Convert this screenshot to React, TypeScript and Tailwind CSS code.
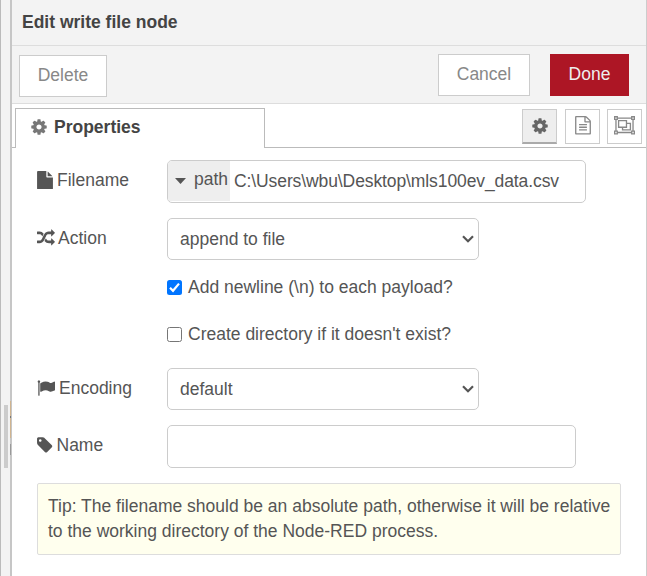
import type { ReactNode } from "react";

function Glyph({ width, d, className }: { width: number; d: string; className: string }) {
  return (
    <svg viewBox={`0 0 ${width} 1792`} className={`block shrink-0 fill-current ${className}`} aria-hidden="true">
      <path transform="translate(0 1536) scale(1 -1)" d={d} />
    </svg>
  );
}

const COG =
  "M1024 640q0 106 -75 181t-181 75t-181 -75t-75 -181t75 -181t181 -75t181 75t75 181zM1536 749v-222q0 -12 -8 -23t-20 -13l-185 -28q-19 -54 -39 -91q35 -50 107 -138q10 -12 10 -25t-9 -23q-27 -37 -99 -108t-94 -71q-12 0 -26 9l-138 108q-44 -23 -91 -38q-16 -136 -29 -186q-7 -28 -36 -28h-222q-14 0 -24.5 8.5t-11.5 21.5l-28 184q-49 16 -90 37l-141 -107q-10 -9 -25 -9q-14 0 -25 11q-126 114 -165 168q-7 10 -7 23q0 12 8 23q15 21 51 66.5t54 70.5q-27 50 -41 99l-183 27q-13 2 -21 12.5t-8 23.5v222q0 12 8 23t19 13l186 28q14 46 39 92q-40 57 -107 138q-10 12 -10 24q0 10 9 23q26 36 98.5 107.5t94.5 71.5q13 0 26 -10l138 -107q44 23 91 38q16 136 29 186q7 28 36 28h222q14 0 24.5 -8.5t11.5 -21.5l28 -184q49 -16 90 -37l142 107q9 9 24 9q13 0 25 -10q129 -119 165 -170q7 -8 7 -22q0 -12 -8 -23q-15 -21 -51 -66.5t-54 -70.5q26 -50 41 -98l183 -28q13 -2 21 -12.5t8 -23.5z";
const FILE =
  "M1024 1024v472q22 -14 36 -28l408 -408q14 -14 28 -36h-472zM896 992q0 -40 28 -68t68 -28h544v-1056q0 -40 -28 -68t-68 -28h-1344q-40 0 -68 28t-28 68v1600q0 40 28 68t68 28h800v-544z";
const RANDOM =
  "M666 1055q-60 -92 -137 -273q-22 45 -37 72.5t-40.5 63.5t-51 56.5t-63 35t-81.5 14.5h-224q-14 0 -23 9t-9 23v192q0 14 9 23t23 9h224q250 0 410 -225zM1792 256q0 -14 -9 -23l-320 -320q-9 -9 -23 -9q-13 0 -22.5 9.5t-9.5 22.5v192q-32 0 -85 -0.5t-81 -1t-73 1t-71 5t-64 10.5t-63 18.5t-58 28.5t-59 40t-55 53.5t-56 69.5q59 93 136 273q22 -45 37 -72.5t40.5 -63.5t51 -56.5t63 -35t81.5 -14.5h256v192q0 14 9 23t23 9q12 0 24 -10l319 -319q9 -9 9 -23zM1792 1152q0 -14 -9 -23l-320 -320q-9 -9 -23 -9q-13 0 -22.5 9.5t-9.5 22.5v192h-256q-48 0 -87 -15t-69 -45t-51 -61.5t-45 -77.5q-32 -62 -78 -171q-29 -66 -49.5 -111t-54 -105t-64 -100t-74 -83t-90 -68.5t-106.5 -42t-128 -16.5h-224q-14 0 -23 9t-9 23v192q0 14 9 23t23 9h224q48 0 87 15t69 45t51 61.5t45 77.5q32 62 78 171q29 66 49.5 111t54 105t64 100t74 83t90 68.5t106.5 42t128 16.5h256v192q0 14 9 23t23 9q12 0 24 -10l319 -319q9 -9 9 -23z";
const FLAG =
  "M320 1280q0 -72 -64 -110v-1266q0 -13 -9.5 -22.5t-22.5 -9.5h-64q-13 0 -22.5 9.5t-9.5 22.5v1266q-64 38 -64 110q0 53 37.5 90.5t90.5 37.5t90.5 -37.5t37.5 -90.5zM1792 1216v-763q0 -25 -12.5 -38.5t-39.5 -27.5q-215 -116 -369 -116q-61 0 -123.5 22t-108.5 48t-115.5 48t-142.5 22q-192 0 -464 -146q-17 -9 -33 -9q-26 0 -45 19t-19 45v742q0 32 31 55q21 14 79 43q236 120 421 120q107 0 200 -29t219 -88q38 -19 88 -19q54 0 117.5 21t110 47t88 47t54.5 21q26 0 45 -19t19 -45z";
const TAG =
  "M448 1088q0 53 -37.5 90.5t-90.5 37.5t-90.5 -37.5t-37.5 -90.5t37.5 -90.5t90.5 -37.5t90.5 37.5t37.5 90.5zM1515 512q0 -53 -37 -90l-491 -492q-39 -37 -91 -37q-53 0 -90 37l-715 716q-38 37 -64.5 101t-26.5 117v416q0 52 38 90t90 38h416q53 0 117 -26.5t102 -64.5l715 -714q37 -39 37 -91z";
const FILE_TEXT =
  "M1468 1156q28 -28 48 -76t20 -88v-1152q0 -40 -28 -68t-68 -28h-1344q-40 0 -68 28t-28 68v1600q0 40 28 68t68 28h896q40 0 88 -20t76 -48zM1024 1400v-376h376q-10 29 -22 41l-313 313q-12 12 -41 22zM1408 -128v1024h-416q-40 0 -68 28t-28 68v416h-768v-1536h1280zM384 736q0 14 9 23t23 9h704q14 0 23 -9t9 -23v-64q0 -14 -9 -23t-23 -9h-704q-14 0 -23 9t-9 23v64zM1120 512q14 0 23 -9t9 -23v-64q0 -14 -9 -23t-23 -9h-704q-14 0 -23 9t-9 23v64q0 14 9 23t23 9h704zM1120 256q14 0 23 -9t9 -23v-64q0 -14 -9 -23t-23 -9h-704q-14 0 -23 9t-9 23v64q0 14 9 23t23 9h704z";
const OBJECT_GROUP =
  "M2048 1152h-128v-1024h128v-384h-384v128h-1280v-128h-384v384h128v1024h-128v384h384v-128h1280v128h384v-384zM1792 1408v-128h128v128h-128zM128 1408v-128h128v128h-128zM256 -128v128h-128v-128h128zM1664 0v128h128v1024h-128v128h-1280v-128h-128v-1024h128v-128h1280zM1920 -128v128h-128v-128h128zM1280 896h384v-768h-896v256h-384v768h896v-256zM512 512h640v512h-640v-512zM1536 256v512h-256v-384h-384v-128h640z";

function Row({ icon, label, children }: { icon: ReactNode; label: string; children: ReactNode }) {
  return (
    <div className="flex">
      <div className="flex h-10 w-[130px] shrink-0 items-center gap-1">
        {icon}
        <span>{label}</span>
      </div>
      {children}
    </div>
  );
}

function Select({ value }: { value: string }) {
  return (
    <div className="flex h-[42px] w-[312px] items-center justify-between rounded-[5px] border border-[#ccc] pr-[4px] pl-3">
      <span>{value}</span>
      <svg viewBox="0 0 12 8" className="h-2 w-3 fill-none stroke-[#555] stroke-[2.2]">
        <path d="M1 1.2 6 6.2 11 1.2" />
      </svg>
    </div>
  );
}

function Check({ checked, label }: { checked?: boolean; label: string }) {
  return (
    <div className="ml-[130px] flex h-[25px] items-center gap-[6px]">
      {checked ? (
        <span className="flex size-[15px] items-center justify-center rounded-[2.5px] bg-[#0075ff]">
          <svg viewBox="0 0 15 15" className="size-[15px] fill-none stroke-white stroke-[2.2]">
            <path d="M3 7.8 6 10.8 12 3.6" />
          </svg>
        </span>
      ) : (
        <span className="size-[15px] rounded-[2.5px] border border-[#767676] bg-white" />
      )}
      <span>{label}</span>
    </div>
  );
}

export default function App() {
  return (
    <div className="flex h-[576px] w-[647px] overflow-hidden bg-white font-['Liberation_Sans',Arial,sans-serif] text-[17.5px] leading-[25px] text-[#555]">
      <div className="flex w-3 shrink-0 border-l border-[#bbb] bg-[#f3f3f3]">
        <div className="mt-[405px] ml-[3px] h-[63px] w-1 bg-[#ccc]" />
        <div className="ml-[2px] flex w-[2px] flex-col bg-[#c6c6c6]">
          <div className="mt-[401px] h-[15px] w-px bg-[#d0b48f]" />
          <div className="h-[2px] w-px bg-[#777]" />
          <div className="h-[20px] w-px bg-[#d0b48f]" />
          <div className="mt-[6px] h-[11px] w-px bg-[#999]" />
        </div>
      </div>
      <div className="flex flex-1 flex-col border-r border-[#ccc]">
        <div className="flex h-[46px] items-center border-b border-[#ddd] bg-[#f3f3f3] pb-[1px] pl-[10px] font-bold text-[#444]">
          Edit write file node
        </div>
        <div className="flex h-[58px] border-b border-[#ddd] bg-[#f3f3f3] pt-2 pr-[17px] pl-[7px] text-[#888]">
          <button className="mt-[1px] h-[42px] w-[88px] border border-[#ccc] bg-white pb-[1px]">Delete</button>
          <button className="ml-auto h-[42px] w-[92px] border border-[#ccc] bg-white pb-[1px]">Cancel</button>
          <button className="ml-5 h-[42px] w-[79px] bg-[#ad1625] pb-[1px] text-[#eee]">Done</button>
        </div>
        <div className="flex h-11 items-end">
          <div className="w-[3px] border-b border-[#bbb]" />
          <div className="flex h-10 w-[250px] items-center gap-[7px] border-x border-t border-[#bbb] pb-[2px] pl-[15px] font-bold text-[#444]">
            <Glyph width={1536} d={COG} className="mb-[2px] h-[18px] w-4 text-[#777]" />
            <span>Properties</span>
          </div>
          <div className="flex h-full flex-1 justify-end border-b border-[#bbb] pt-[5px] pr-1 text-[#888]">
            <div className="flex h-[35px] w-[35px] items-center justify-center border border-b-2 border-[#ccc] border-b-[#aaa] bg-[#eee] text-[#666]">
              <Glyph width={1536} d={COG} className="mb-[1px] h-[18px] w-4" />
            </div>
            <div className="ml-2 flex h-[35px] w-[35px] items-center justify-center border border-[#ccc]">
              <Glyph width={1536} d={FILE_TEXT} className="mb-[2px] h-[18.5px] w-4" />
            </div>
            <div className="ml-[7px] flex h-[35px] w-[35px] items-center justify-center border border-[#ccc]">
              <Glyph width={2048} d={OBJECT_GROUP} className="mb-[2px] h-[18.5px] w-[21px]" />
            </div>
          </div>
        </div>
        <div className="flex flex-col pt-3 pl-[25px]">
          <Row icon={<Glyph width={1536} d={FILE} className="h-[18.5px] w-4" />} label="Filename">
            <div className="flex h-[43px] w-[419px] overflow-hidden rounded-[5px] border border-[#ccc]">
              <div className="flex h-10 w-[62px] items-center bg-[#eee] pb-[3px] pl-[7px]">
                <svg viewBox="0 0 11 6" className="mt-[3px] mr-[8px] h-[6px] w-[11px] shrink-0 fill-current">
                  <path d="M0 0h11L5.500 6z" />
                </svg>
                <span>path</span>
              </div>
              <span className="flex items-center pl-1 tracking-[-0.1px]">C:\Users\wbu\Desktop\mls100ev_data.csv</span>
            </div>
          </Row>
          <div className="h-[15px]" />
          <Row icon={<Glyph width={1792} d={RANDOM} className="h-[18px] w-[18px] -mr-px" />} label="Action">
            <Select value="append to file" />
          </Row>
          <div className="h-[15px]" />
          <Check checked label="Add newline (\n) to each payload?" />
          <div className="h-[22px]" />
          <Check label="Create directory if it doesn't exist?" />
          <div className="h-[21px]" />
          <Row icon={<Glyph width={1792} d={FLAG} className="h-[18px] w-[18px]" />} label="Encoding">
            <Select value="default" />
          </Row>
          <div className="h-[15px]" />
          <Row icon={<Glyph width={1536} d={TAG} className="h-[18px] w-[15.5px]" />} label="Name">
            <div className="h-[43px] w-[409px] rounded-[5px] border border-[#ccc]" />
          </Row>
          <div className="mt-[15px] h-[72px] w-[584px] rounded-[2px] border border-[#ddd] bg-[#ffffee] px-[10px] pt-[10px] whitespace-nowrap">
            Tip: The filename should be an absolute path, otherwise it will be relative
            <br />
            to the working directory of the Node-RED process.
          </div>
        </div>
      </div>
    </div>
  );
}
